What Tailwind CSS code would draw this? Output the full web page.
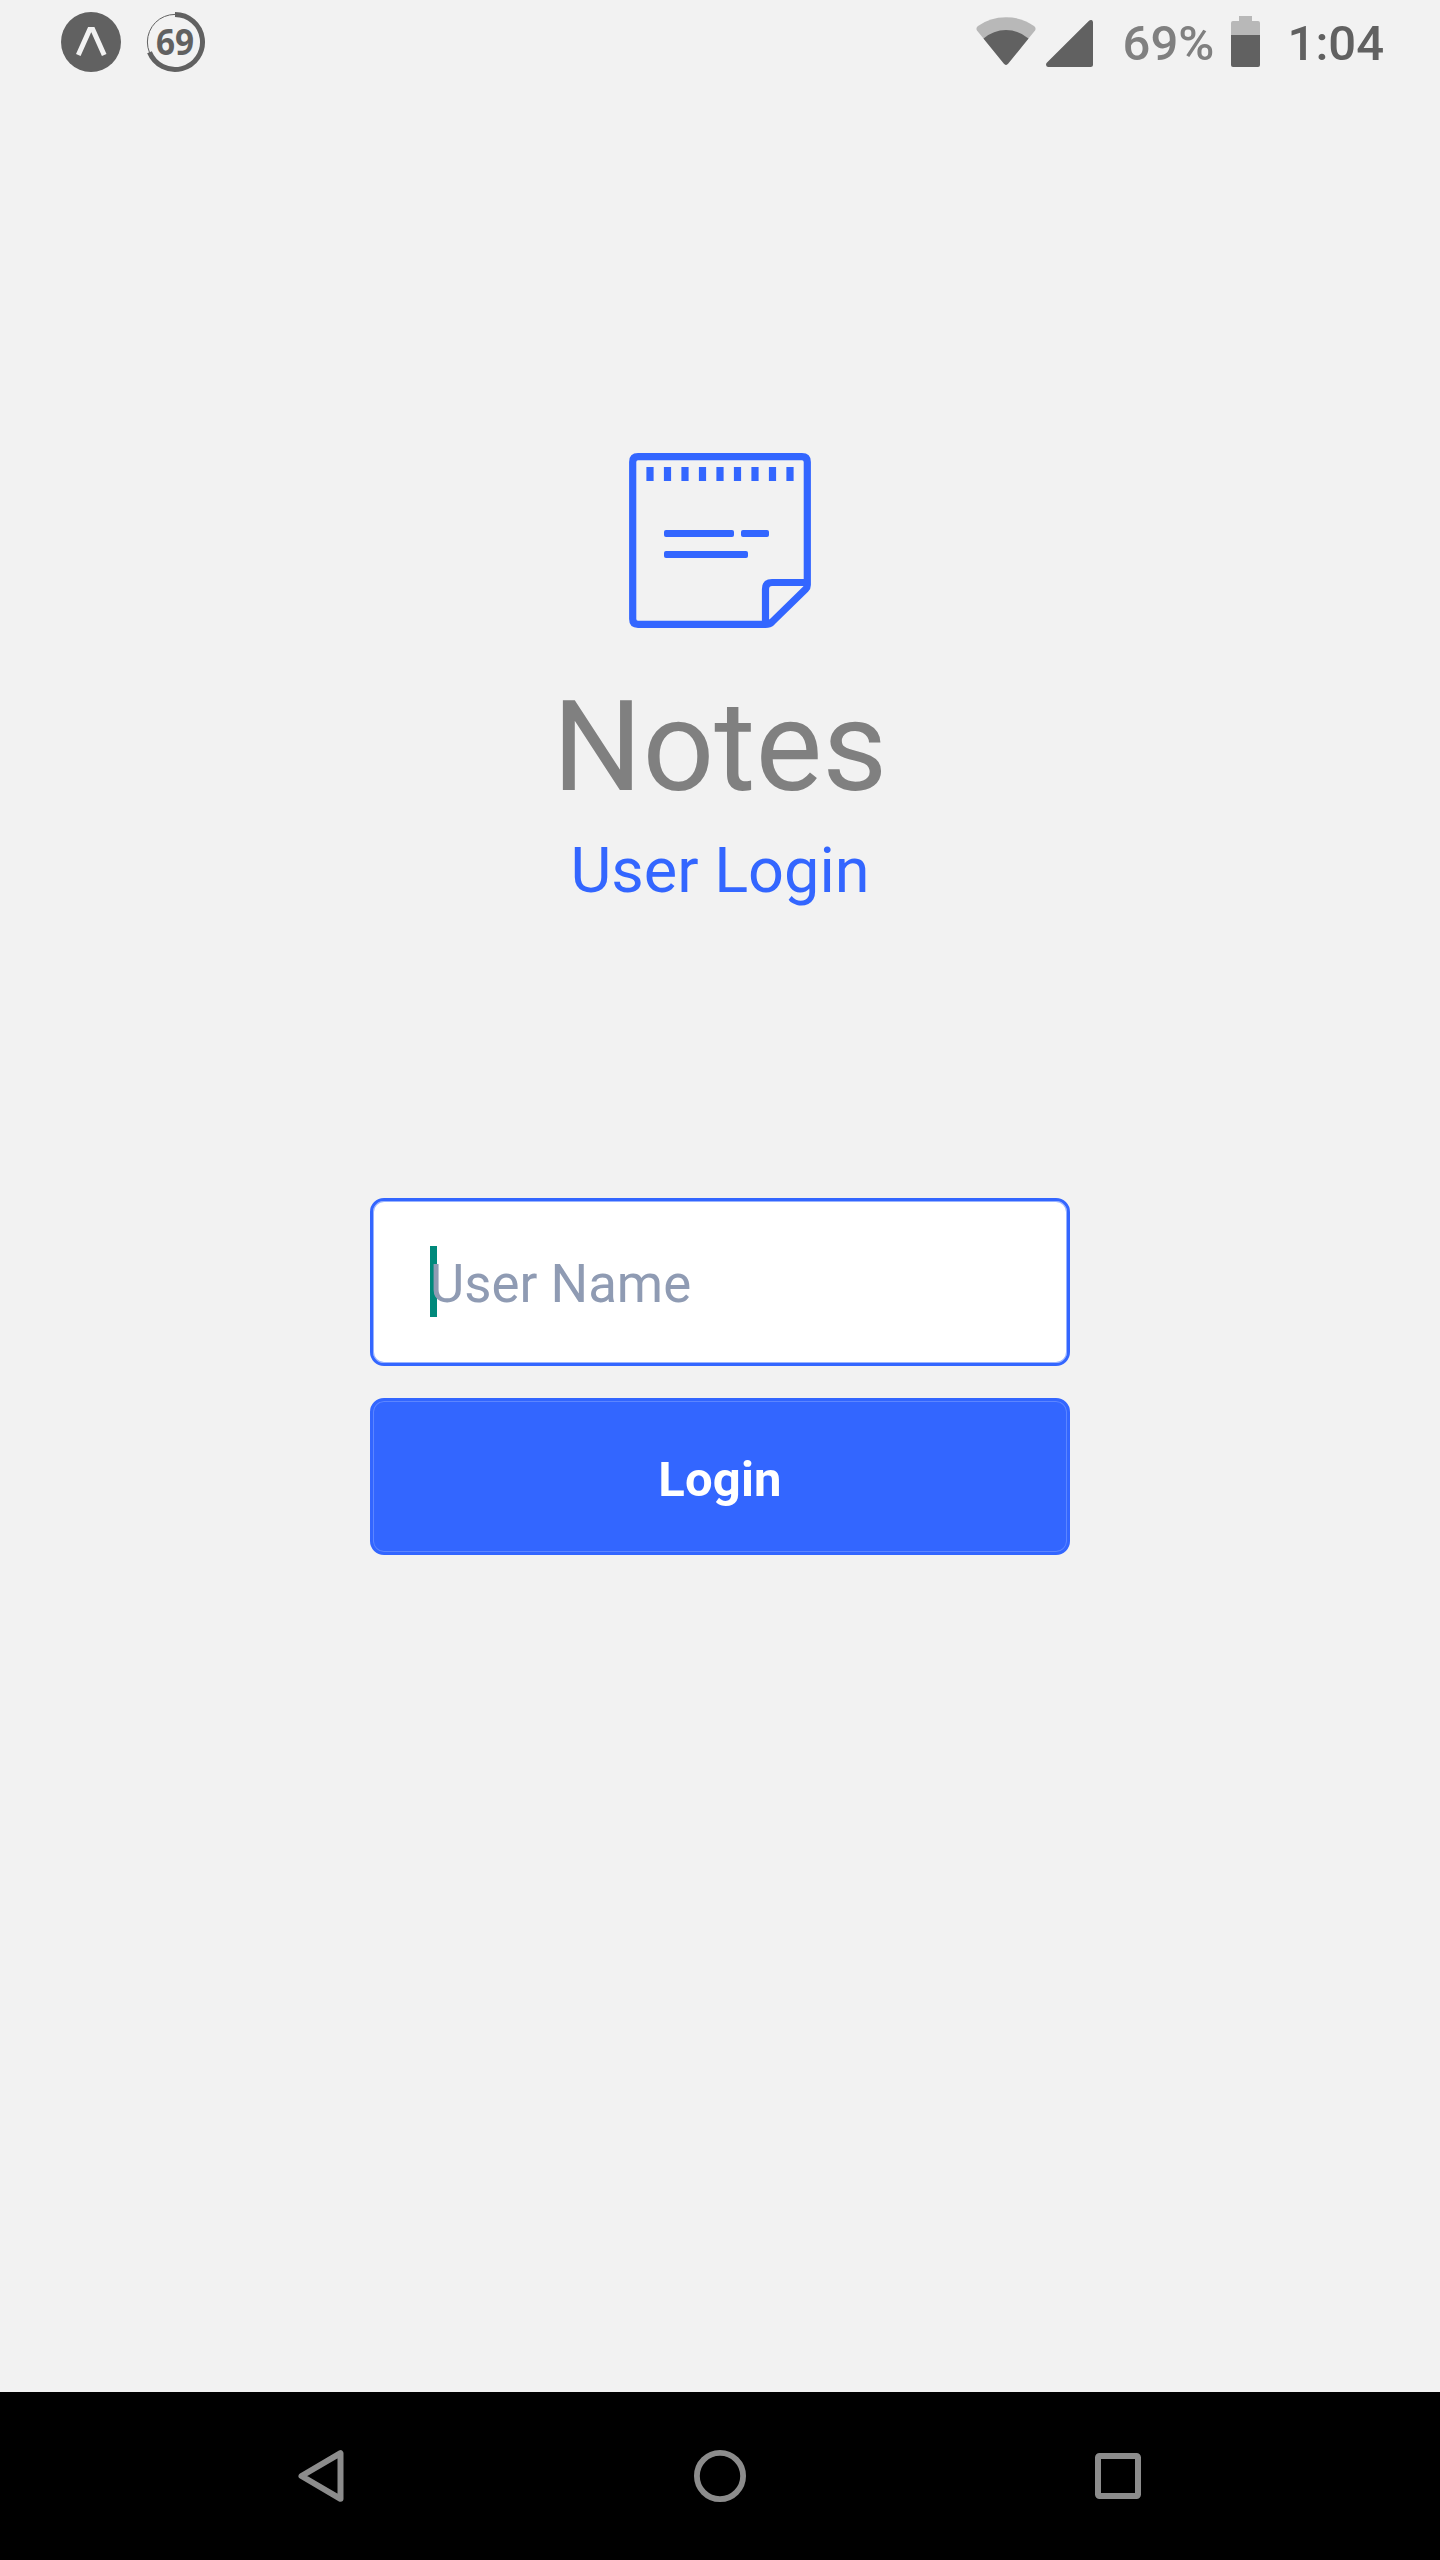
<!DOCTYPE html>
<html lang="en">
<head>
<meta charset="utf-8">
<title>Notes</title>
<script src="https://cdn.jsdelivr.net/npm/@tailwindcss/browser@4"></script>
</head>
<body class="bg-[#f2f2f2] font-['Roboto',sans-serif]">
<div class="flex h-[2560px] w-[1440px] flex-col overflow-hidden">

  <!-- Status bar -->
  <header class="flex h-[88px] shrink-0 items-start justify-between pl-[60px] pr-[56px] text-[#616161]">
    <div class="flex h-[84px] items-center gap-[22px]">
      <svg class="size-[62px]" viewBox="0 0 62 62"><circle cx="31" cy="31" r="30" fill="#616161"/><path d="M18.300 44 29.700 18.500h3.100L44.200 44" fill="none" stroke="#f2f2f2" stroke-width="5"/></svg>
      <svg class="size-[62px]" viewBox="0 0 62 62"><circle cx="31" cy="31" r="27.600" fill="none" stroke="#616161" stroke-width="1"/><path d="M31 3.500A27.500 27.500 0 1 1 5.500 41.300" fill="none" stroke="#616161" stroke-width="5"/><text transform="translate(31 43.800) scale(.94 1)" text-anchor="middle" font-family="Noto Sans, sans-serif" font-weight="700" font-size="35.500" fill="#616161">69</text></svg>
    </div>
    <div class="flex h-[88px] items-center text-[49px] font-medium leading-none">
      <svg class="h-[88px] w-[64px]" viewBox="974 0 64 88"><path d="M1008 63.800Q1006 66 1004 63.800L977 30.500Q975.500 28 978 26Q990 17.200 1006 17.200T1034 26Q1036.500 28 1035 30.500Z" fill="#b8b8b8"/><path d="M983.500 38.500Q993.500 30 1006 30T1028.500 38.500L1008 63.800Q1006 66 1004 63.800Z" fill="#616161"/></svg>
      <svg class="ml-[6px] h-[88px] w-[52px]" viewBox="1044 0 52 88"><path d="M1088.500 21.300Q1090 19.800 1091.500 20.100Q1093 20.600 1093 22.500V64.500Q1093 67 1090.500 67H1048Q1046 66.800 1046 64.500Q1046 63.300 1047 62.500Z" fill="#616161"/></svg>
      <span class="mb-px ml-[27px] w-[92px] whitespace-nowrap text-[#808080]">69%</span>
      <svg class="ml-[14px] h-[88px] w-[33px]" viewBox="1229 0 33 88"><path d="M1239 16h13v5h6q2 0 2 2v12.300h-29V23q0-2 2-2h6z" fill="#b8b8b8"/><path d="M1231 35h29v30q0 2-2 2h-25q-2 0-2-2z" fill="#616161"/></svg>
      <span class="mb-px ml-[26px] whitespace-nowrap">1:04</span>
    </div>
  </header>

  <main class="flex grow flex-col items-center">
    <svg class="mt-[352px] h-[200px] w-[220px] shrink-0" viewBox="0 0 220 200" fill="none" stroke="#3366ff" stroke-width="7.200">
      <path d="M155.500 184.300H28Q22.700 184.300 22.700 179V22Q22.700 16.700 28 16.700H192Q197.300 16.700 197.300 22V145Q197.300 147.500 195.500 149.300L162 182Q159.500 184.300 155.500 184.300V149Q155.500 142.500 162 142.500H197"/>
      <path d="M40 27v14M57.500 27v14M75 27v14M92.500 27v14M110 27v14M127.500 27v14M145 27v14M162.500 27v14M180 27v14"/>
      <path d="M55.500 93.500H122.500M132.500 93.500H157.500M55.500 114.500H136.500" stroke-width="4.200"/>
      <g fill="#3366ff" stroke="none"><rect x="54" y="89.900" width="70" height="7.200" rx="2"/><rect x="131" y="89.900" width="28" height="7.200" rx="2"/><rect x="54" y="110.900" width="84" height="7.200" rx="2"/></g>
    </svg>
    <h1 class="mt-[33px] text-[126px] leading-[148px] text-[#808080]">Notes</h1>
    <h2 class="mt-[13px] text-[63px] leading-[74px] text-[#3366ff]">User Login</h2>

    <form class="mt-[290px] flex w-[700px] flex-col gap-[32px]">
      <div class="flex h-[168px] items-center rounded-[14px] border-3 border-[#3366ff] bg-white pl-[57px] shadow-[inset_0_0_0_1px_#99b3ff]">
        <div class="relative flex h-[71px] items-center pt-[3px]">
          <span class="absolute -top-[1px] left-0 h-[71px] w-[7px] bg-[#00897b]"></span>
          <span class="relative text-[52.8px] leading-[62px] text-[#8f9bb3]">User Name</span>
        </div>
      </div>
      <button type="button" class="flex h-[157px] items-center justify-center rounded-[14px] border-3 border-[#3366ff] bg-[#3366ff] pt-[7px] text-[49px] font-bold leading-[58px] tracking-[0.2px] text-white shadow-[inset_0_0_0_1px_#5c85ff]">Login</button>
    </form>
  </main>

  <!-- Navigation bar -->
  <nav class="flex h-[168px] shrink-0 items-center justify-between bg-black px-[292px]">
    <svg class="size-[60px]" viewBox="0 0 60 60"><path d="M48.500 7.200V52.800L9.500 30Z" fill="none" stroke="#8c8c8c" stroke-width="6" stroke-linejoin="round"/></svg>
    <svg class="size-[60px]" viewBox="0 0 60 60"><circle cx="30" cy="30" r="23.100" fill="none" stroke="#8c8c8c" stroke-width="5.800"/></svg>
    <svg class="size-[60px]" viewBox="0 0 60 60"><rect x="10" y="10" width="40" height="40" rx="1.500" fill="none" stroke="#8c8c8c" stroke-width="6"/></svg>
  </nav>
</div>
</body>
</html>
